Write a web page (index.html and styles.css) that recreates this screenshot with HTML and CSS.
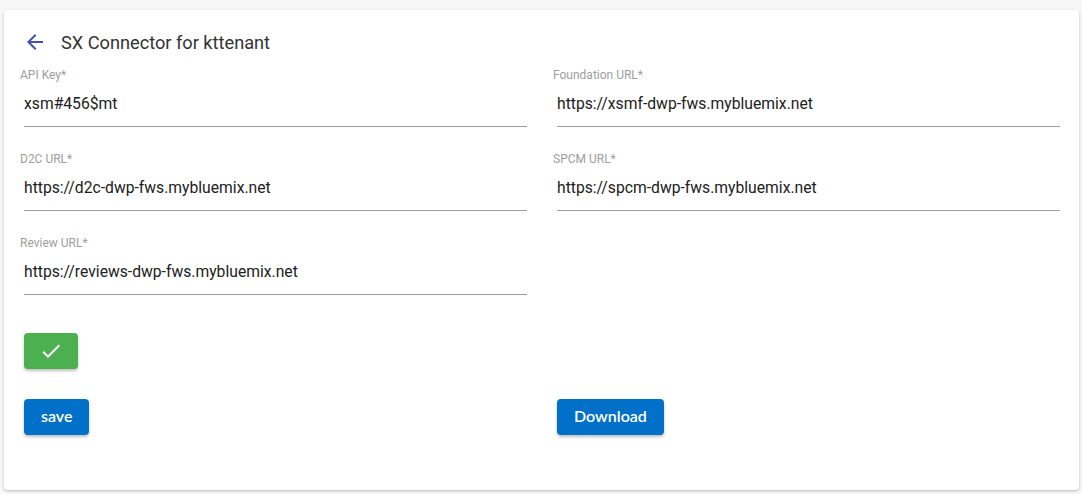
FILE: index.html
```html
<!DOCTYPE html>
<html lang="en">

<head>
    <meta charset="UTF-8">
    <meta name="viewport" content="width=device-width, initial-scale=1.0">
    <title>SX Connector</title>
    <link rel="stylesheet" href="styles.css">
</head>

<body>
    <div class="card">
        <div class="card-header">
            <span class="back-icon">
                <svg width="24" height="24" viewBox="0 0 24 24">
                    <path d="M20 11H7.83l5.59-5.59L12 4l-8 8 8 8 1.41-1.41L7.83 13H20v-2z" fill="#3f51b5"/>
                </svg>
            </span>
            <h1 class="title">SX Connector for kttenant</h1>
        </div>

        <div class="form-grid">
            <div class="field">
                <label class="field-label">API Key*</label>
                <div class="field-input">xsm#456$mt</div>
            </div>
            <div class="field">
                <label class="field-label">Foundation URL*</label>
                <div class="field-input">https://xsmf-dwp-fws.mybluemix.net</div>
            </div>
            <div class="field">
                <label class="field-label">D2C URL*</label>
                <div class="field-input">https://d2c-dwp-fws.mybluemix.net</div>
            </div>
            <div class="field">
                <label class="field-label">SPCM URL*</label>
                <div class="field-input">https://spcm-dwp-fws.mybluemix.net</div>
            </div>
            <div class="field">
                <label class="field-label">Review URL*</label>
                <div class="field-input">https://reviews-dwp-fws.mybluemix.net</div>
            </div>
        </div>

        <div class="check-row">
            <button class="btn btn-success">
                <svg width="24" height="24" viewBox="0 0 24 24">
                    <path d="M9 16.17L4.83 12l-1.42 1.41L9 19 21 7l-1.41-1.41z" fill="#fff"/>
                </svg>
            </button>
        </div>

        <div class="actions">
            <div class="action-col">
                <button class="btn btn-primary">save</button>
            </div>
            <div class="action-col">
                <button class="btn btn-primary">Download</button>
            </div>
        </div>
    </div>
</body>

</html>
```

FILE: styles.css
```css
body {
    margin: 0;
    padding: 10px 3px 4px 4px;
    background-color: #f7f7f7;
    font-family: Roboto, Arial, sans-serif;
}

.card {
    background-color: #ffffff;
    border-radius: 4px;
    box-shadow: 0 1px 3px rgba(0, 0, 0, 0.25);
    height: 480px;
    box-sizing: border-box;
    padding: 20px 13px 0 16px;
}

.card-header {
    display: flex;
    align-items: center;
    height: 24px;
    margin-left: 3px;
}

.back-icon {
    display: flex;
    width: 24px;
    height: 24px;
}

.title {
    margin: 0 0 0 14px;
    font-size: 18.2px;
    font-weight: 400;
    color: #333333;
}

.form-grid {
    display: grid;
    grid-template-columns: 513px 513px;
    column-gap: 20px;
    margin-top: 13px;
}

.field {
    display: flex;
    flex-direction: column;
    height: 84px;
}

.field-label {
    font-size: 12px;
    color: #9e9e9e;
    line-height: 16px;
}

.field-input {
    margin: 0 6px 0 4px;
    padding: 11px 0 12px 0;
    font-size: 15.7px;
    line-height: 20px;
    color: #212121;
    border-bottom: 1px solid #9e9e9e;
}

.check-row {
    margin: 14px 0 0 4px;
}

.btn {
    border: none;
    border-radius: 4px;
    height: 36px;
    color: #ffffff;
    font-family: Lato, "Open Sans", sans-serif;
    font-size: 16px;
    font-weight: 600;
    box-shadow: 0 2px 3px rgba(0, 0, 0, 0.25);
    cursor: pointer;
}

.btn-success {
    width: 54px;
    background-color: #4caf50;
    display: flex;
    align-items: center;
    justify-content: center;
}

.btn-primary {
    background-color: #0070c9;
    padding: 0 17px 3px 17px;
}

.actions {
    display: grid;
    grid-template-columns: 513px 513px;
    column-gap: 20px;
    margin-top: 30px;
}

.action-col {
    padding-left: 4px;
}
```
